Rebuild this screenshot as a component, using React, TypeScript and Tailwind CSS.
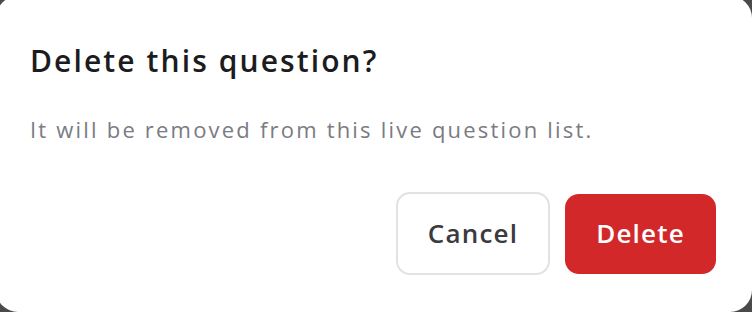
export default function App() {
  return (
    <div className="w-[752px] h-[312px] overflow-hidden bg-[#4a4a4a] font-['Open_Sans',sans-serif]">
      <div className="-mt-[4px] -ml-[4px] w-[756px] h-[316px] rounded-[22px] bg-white pt-[47px] pl-[34px] pr-[36px]">
        <h2 className="text-[30px] leading-[36px] font-semibold tracking-[2.1px] text-[#1c1c1e] whitespace-nowrap">Delete this question?</h2>
        <p className="mt-[36px] text-[22px] leading-[28px] tracking-[2.2px] text-[#7b7b82] whitespace-nowrap">It will be removed from this live question list.</p>
        <div className="mt-[49px] flex items-center justify-end gap-[15px]">
          <button className="w-[154px] h-[83px] rounded-[14px] border-2 border-[#e2e2e4] bg-white text-[26px] font-semibold tracking-[1.2px] text-[#3a3a40]">Cancel</button>
          <button className="w-[151px] h-[80px] rounded-[14px] bg-[#d3282a] text-[26px] font-semibold tracking-[1.2px] text-white">Delete</button>
        </div>
      </div>
    </div>
  );
}
